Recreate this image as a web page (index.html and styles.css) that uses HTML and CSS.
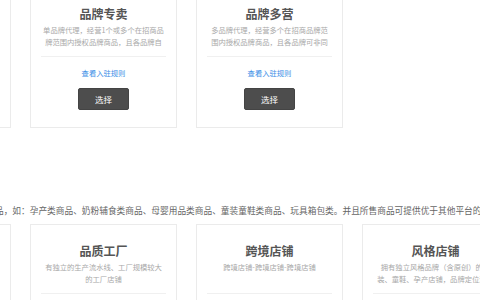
FILE: index.html
```html
<!DOCTYPE html>
<html lang="zh-CN">
<head>
  <meta charset="UTF-8">
  <title>选择店铺类型</title>
  <link rel="stylesheet" href="styles.css">
</head>
<body>
  <div class="page">
    <div class="row">
      <div class="card">
        <h3>官方旗舰</h3>
        <p class="desc">以自有品牌或由权利人独占性授权入驻开设的官方旗舰店铺</p>
        <div class="line"></div>
        <a class="rule" href="#">查看入驻规则</a>
        <button class="pick">选择</button>
      </div>
      <div class="card">
        <h3>品牌专卖</h3>
        <p class="desc">单品牌代理，经营1个或多个在招商品牌范围内授权品牌商品，且各品牌自主经营</p>
        <div class="line"></div>
        <a class="rule" href="#">查看入驻规则</a>
        <button class="pick">选择</button>
      </div>
      <div class="card">
        <h3>品牌多营</h3>
        <p class="desc">多品牌代理，经营多个在招商品牌范围内授权品牌商品，且各品牌可非同一实际控制人</p>
        <div class="line"></div>
        <a class="rule" href="#">查看入驻规则</a>
        <button class="pick">选择</button>
      </div>
    </div>

    <p class="intro">店铺需经营母婴相关类目的商品，如：孕产类商品、奶粉辅食类商品、母婴用品类商品、童装童鞋类商品、玩具箱包类。并且所售商品可提供优于其他平台的售后服务。</p>

    <div class="row">
      <div class="card">
        <h3>品牌店铺</h3>
        <p class="desc">经营自有品牌或授权品牌的母婴店铺</p>
        <div class="line"></div>
        <a class="rule" href="#">查看入驻规则</a>
        <button class="pick">选择</button>
      </div>
      <div class="card">
        <h3>品质工厂</h3>
        <p class="desc">有独立的生产流水线、工厂规模较大的工厂店铺</p>
        <div class="line"></div>
        <a class="rule" href="#">查看入驻规则</a>
        <button class="pick">选择</button>
      </div>
      <div class="card">
        <h3>跨境店铺</h3>
        <p class="desc">跨境店铺-跨境店铺-跨境店铺</p>
        <div class="line"></div>
        <a class="rule" href="#">查看入驻规则</a>
        <button class="pick">选择</button>
      </div>
      <div class="card">
        <h3>风格店铺</h3>
        <p class="desc">拥有独立风格品牌（含原创）的女装、童鞋、孕产店铺，品牌定位清晰</p>
        <div class="line"></div>
        <a class="rule" href="#">查看入驻规则</a>
        <button class="pick">选择</button>
      </div>
    </div>
  </div>
</body>
</html>
```

FILE: styles.css
```css
body {
  margin: 0;
  background: #fff;
  font-family: "Noto Sans CJK SC", "Noto Sans", sans-serif;
  overflow: hidden;
}
.page {
  margin-left: -136px;
  margin-top: -13px;
  width: 800px;
}
.row {
  display: flex;
  gap: 19px;
}
.card {
  flex: 0 0 147px;
  box-sizing: border-box;
  border: 1px solid #ebebeb;
  padding: 18px 10px 17px;
  display: flex;
  flex-direction: column;
  align-items: center;
  text-align: center;
}
.card h3 {
  margin: 0;
  font-size: 12px;
  line-height: 16px;
  font-weight: bold;
  color: #555;
}
.desc {
  margin: 2px 0 0;
  width: 122px;
  height: 24px;
  overflow: hidden;
  font-size: 7.3px;
  line-height: 12px;
  color: #a8a8a8;
}
.line {
  align-self: stretch;
  height: 1px;
  margin-top: 8px;
  background: #f0f0f0;
}
.rule {
  margin-top: 11px;
  font-size: 7.3px;
  line-height: 10px;
  color: #3a8ee6;
  text-decoration: none;
}
.pick {
  margin-top: 10px;
  width: 51px;
  height: 22px;
  padding: 0;
  border: 1px solid #444;
  border-radius: 2px;
  background: #4d4d4d;
  color: #fff;
  font-family: inherit;
  font-size: 8.5px;
  cursor: pointer;
}
.intro {
  margin: 75px 0 5px;
  padding-left: 18px;
  white-space: nowrap;
  font-size: 8.7px;
  line-height: 16px;
  color: #666;
}
```
